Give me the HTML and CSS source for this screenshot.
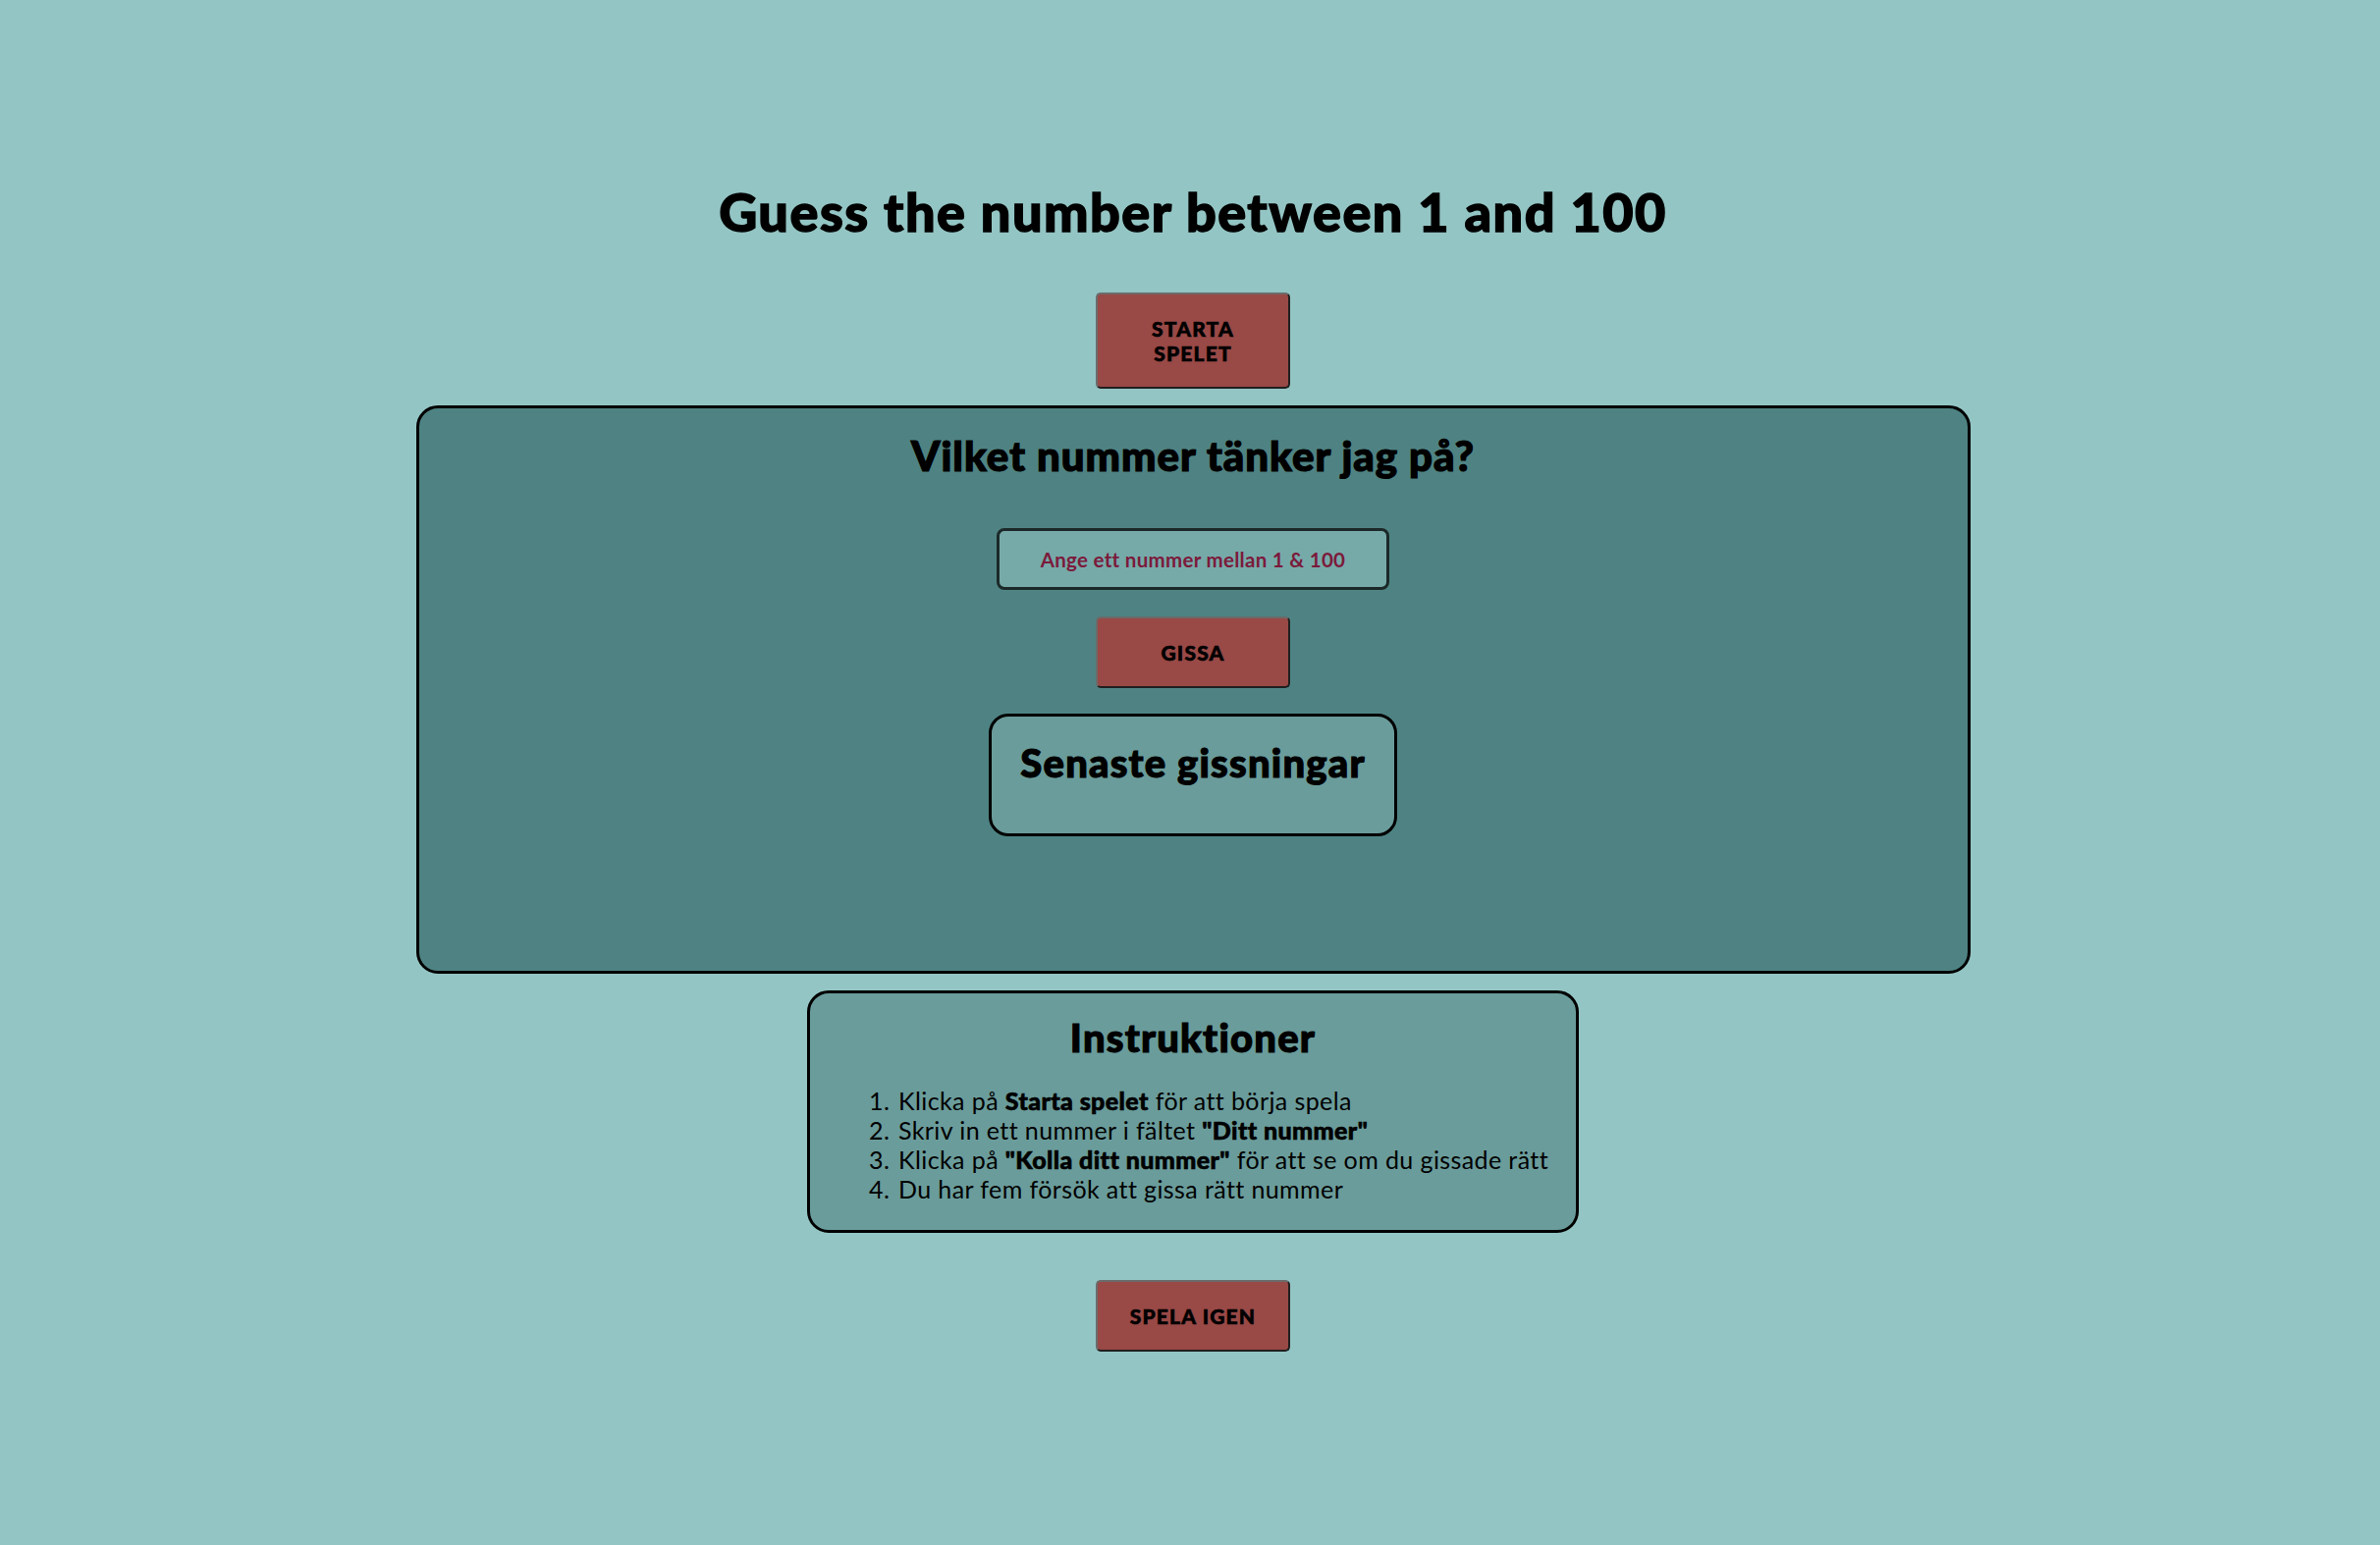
FILE: index.html
```html
<!DOCTYPE html>
<html lang="sv">
<head>
<meta charset="utf-8">
<title>Guess the number</title>
<link rel="stylesheet" href="styles.css">
</head>
<body>
<main class="page">
  <h1 class="title">Guess the number between 1 and 100</h1>
  <button class="btn btn-start">Starta spelet</button>
  <section class="game">
    <h2 class="game-heading">Vilket nummer tänker jag på?</h2>
    <input class="guess-input" type="text" placeholder="Ange ett nummer mellan 1 &amp; 100">
    <button class="btn btn-guess">Gissa</button>
    <div class="recent">
      <h3 class="recent-heading">Senaste gissningar</h3>
    </div>
  </section>
  <section class="instructions">
    <h3 class="instructions-heading">Instruktioner</h3>
    <ol class="steps">
      <li>Klicka på <strong>Starta spelet</strong> för att börja spela</li>
      <li>Skriv in ett nummer i fältet <strong>"Ditt nummer"</strong></li>
      <li>Klicka på <strong>"Kolla ditt nummer"</strong> för att se om du gissade rätt</li>
      <li>Du har fem försök att gissa rätt nummer</li>
    </ol>
  </section>
  <button class="btn btn-again">Spela igen</button>
</main>
</body>
</html>
```

FILE: styles.css
```css
* {
  box-sizing: border-box;
}

html, body {
  margin: 0;
  background: #93c5c4;
}

body {
  font-family: Lato, "Open Sans", sans-serif;
  color: #000;
  min-height: 1574px;
}

.page {
  display: flex;
  flex-direction: column;
  align-items: center;
  padding: 186px 0 0 6px;
}

.title {
  margin: 0;
  font-size: 54px;
  line-height: 60px;
  font-weight: 900;
  letter-spacing: 1.5px;
  -webkit-text-stroke: 1.4px #000;
}

.btn {
  display: block;
  width: 198px;
  padding: 22px 28px;
  font-family: Lato, sans-serif;
  font-size: 21px;
  line-height: 25px;
  font-weight: 900;
  letter-spacing: 1.2px;
  -webkit-text-stroke: 0.6px #000;
  text-transform: uppercase;
  color: #000;
  background: #994946;
  border: 2px solid;
  border-color: #6b6b6b #1f1f1f #1f1f1f #6b6b6b;
  border-radius: 5px;
  text-align: center;
}

.btn-start {
  margin-top: 52px;
  padding-left: 40px;
  padding-right: 40px;
}

.game {
  margin-top: 17px;
  width: 1583px;
  height: 579px;
  background: #4f8383;
  border: 3px solid #000;
  border-radius: 22px;
  display: flex;
  flex-direction: column;
  align-items: center;
  padding-top: 25px;
}

.game-heading {
  margin: 0;
  font-size: 42px;
  line-height: 46px;
  font-weight: 900;
  letter-spacing: 1px;
  -webkit-text-stroke: 1.2px #000;
}

.guess-input {
  margin-top: 51px;
  width: 400px;
  height: 63px;
  background: #76aaa9;
  border: 3px solid #1c2929;
  border-radius: 8px;
  font-family: Lato, sans-serif;
  font-size: 20.5px;
  font-weight: 700;
  letter-spacing: 0.3px;
  text-align: center;
  color: #7b1a3b;
}

.guess-input::placeholder {
  color: #7b1a3b;
  opacity: 1;
}

.btn-guess {
  margin-top: 27px;
}

.recent {
  margin-top: 26px;
  width: 416px;
  height: 125px;
  background: #6a9c9b;
  border: 3px solid #000;
  border-radius: 20px;
  padding-top: 25px;
  text-align: center;
}

.recent-heading,
.instructions-heading {
  margin: 0;
  font-size: 40px;
  line-height: 44px;
  font-weight: 900;
  letter-spacing: 1.2px;
  -webkit-text-stroke: 1.1px #000;
}

.instructions {
  margin-top: 17px;
  width: 786px;
  height: 247px;
  background: #6a9c9b;
  border: 3px solid #000;
  border-radius: 22px;
  padding: 23px 20px 0 20px;
  text-align: center;
}

.steps {
  margin: 27px 0 0 0;
  padding-left: 68px;
  text-align: left;
  font-size: 25px;
  line-height: 30px;
  letter-spacing: 0.4px;
}

.steps li {
  padding-left: 2px;
}

.steps strong {
  font-weight: 900;
  -webkit-text-stroke: 0.6px #000;
}

.btn-again {
  margin-top: 48px;
}
```
